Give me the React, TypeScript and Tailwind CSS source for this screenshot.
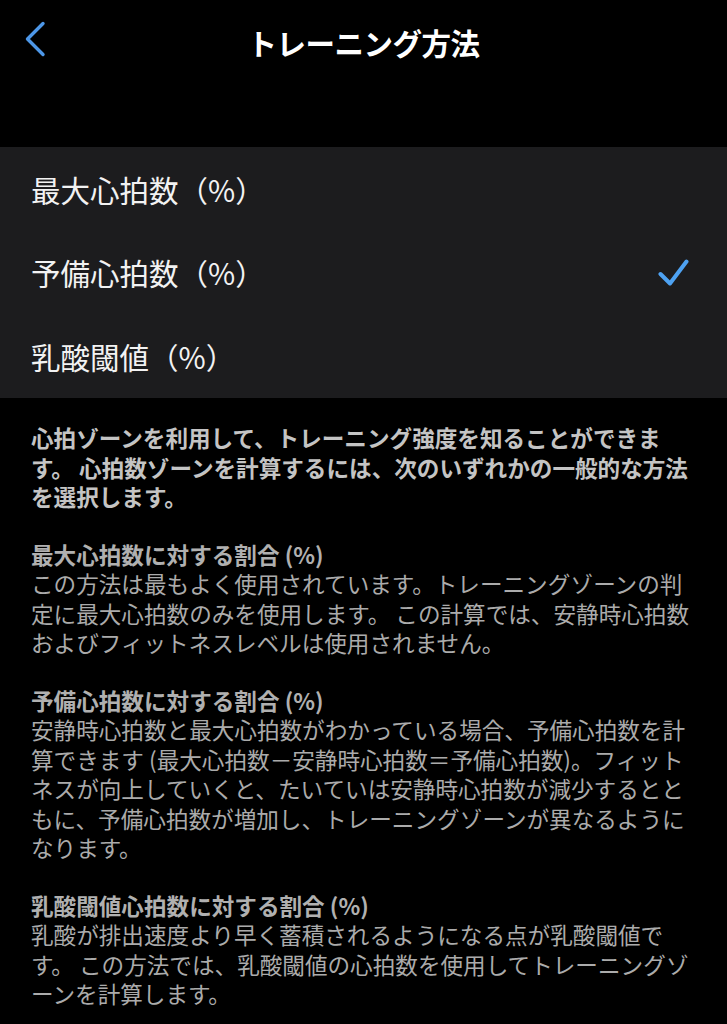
import { ReactNode } from "react";

const methods = [
  { label: "最大心拍数（%）", selected: false },
  { label: "予備心拍数（%）", selected: true },
  { label: "乳酸閾値（%）", selected: false },
];

const sections = [
  {
    title: "最大心拍数に対する割合 (%)",
    body: "この方法は最もよく使用されています。トレーニングゾーンの判定に最大心拍数のみを使用します。 この計算では、安静時心拍数およびフィットネスレベルは使用されません。",
  },
  {
    title: "予備心拍数に対する割合 (%)",
    body: "安静時心拍数と最大心拍数がわかっている場合、予備心拍数を計算できます (最大心拍数－安静時心拍数＝予備心拍数)。フィットネスが向上していくと、たいていは安静時心拍数が減少するとともに、予備心拍数が増加し、トレーニングゾーンが異なるようになります。",
  },
  {
    title: "乳酸閾値心拍数に対する割合 (%)",
    body: "乳酸が排出速度より早く蓄積されるようになる点が乳酸閾値です。 この方法では、乳酸閾値の心拍数を使用してトレーニングゾーンを計算します。",
  },
];

function BackChevron() {
  return (
    <svg width="22" height="36" viewBox="0 0 22 36" fill="none" className="-mt-[6px]">
      <path
        d="M19 2.5 L3.5 18 L19 33.5"
        stroke="#4d97e8"
        strokeWidth="3.4"
        strokeLinecap="round"
        strokeLinejoin="round"
      />
    </svg>
  );
}

function Check() {
  return (
    <svg width="31" height="27" viewBox="0 0 31 27" fill="none">
      <path
        d="M2.5 15 L12 24.5 L28.5 2.5"
        stroke="#4ea2f2"
        strokeWidth="4"
        strokeLinecap="round"
        strokeLinejoin="round"
      />
    </svg>
  );
}

function Paragraph({ children, className }: { children: ReactNode; className?: string }) {
  return <p className={className}>{children}</p>;
}

export default function App() {
  return (
    <div className="min-h-[1024px] w-[727px] bg-black font-['Noto_Sans_CJK_JP','Noto_Sans',sans-serif] overflow-hidden">
      {/* Navigation bar */}
      <header className="grid h-[84px] grid-cols-[1fr_auto_1fr] items-center">
        <div className="pl-[24px]">
          <BackChevron />
        </div>
        <h1 className="text-[29.5px] font-bold tracking-[-0.5px] text-white">トレーニング方法</h1>
        <div />
      </header>

      {/* Method picker */}
      <div className="mt-[63px] bg-[#1c1c1e]">
        {methods.map((m) => (
          <div key={m.label} className="flex h-[83.7px] items-center justify-between pl-[31px] pr-[38px]">
            <span className="text-[29.5px] text-[#f2f2f2]">{m.label}</span>
            {m.selected && <Check />}
          </div>
        ))}
      </div>

      {/* Footer explanation */}
      <div className="space-y-[28px] pl-[31px] pr-[32px] pt-[25px] text-[22.6px] leading-[29.5px]">
        <Paragraph className="font-semibold text-[#c4c4c4]">
          心拍ゾーンを利用して、トレーニング強度を知ることができます。 心拍数ゾーンを計算するには、次のいずれかの一般的な方法を選択します。
        </Paragraph>
        {sections.map((s) => (
          <div key={s.title} className="text-[#ababab]">
            <h2 className="font-bold text-[#b0b0b0]">{s.title}</h2>
            <Paragraph>{s.body}</Paragraph>
          </div>
        ))}
      </div>
    </div>
  );
}
